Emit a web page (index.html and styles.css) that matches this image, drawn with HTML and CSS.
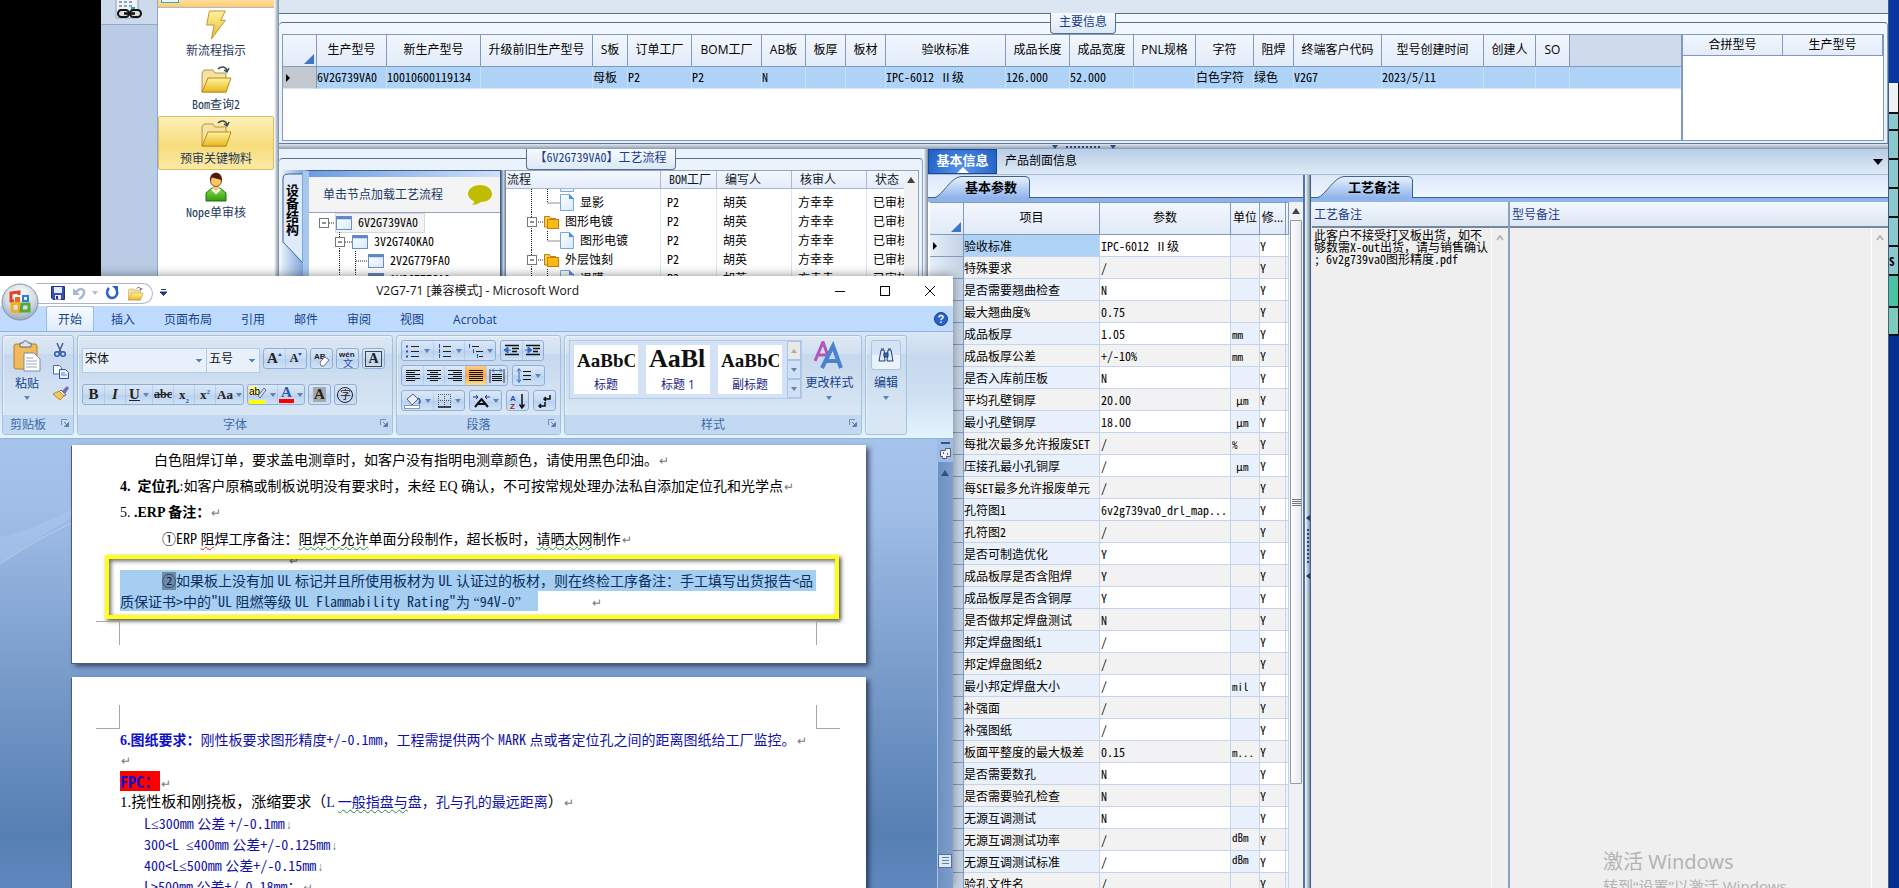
FILE: index.html
```html
<!DOCTYPE html>
<html lang="zh-CN">
<head>
<meta charset="utf-8">
<title>V2G7-71 [兼容模式] - Microsoft Word</title>
<link rel="stylesheet" href="styles.css">
</head>
<body>
<svg width="0" height="0" class="defs" aria-hidden="true">
  <defs>
    <linearGradient id="gy" x1="0" y1="0" x2="0" y2="1"><stop offset="0" stop-color="#fff3a0"/><stop offset="1" stop-color="#eab820"/></linearGradient>
    <linearGradient id="gg" x1="0" y1="0" x2="0" y2="1"><stop offset="0" stop-color="#8be04a"/><stop offset="1" stop-color="#2f9a10"/></linearGradient>
    <linearGradient id="gb" x1="0" y1="0" x2="1" y2="1"><stop offset="0" stop-color="#ffffff"/><stop offset="1" stop-color="#d5e9fb"/></linearGradient>
    <symbol id="folder" viewBox="0 0 32 30"><path d="M2 9l2-3h9l2 3h11v19H2z" fill="#f3e2a4" stroke="#b8923c"/><path d="M2 28l6-14h23l-5 14z" fill="url(#gy)" stroke="#b98a10"/><path d="M18 5c3-3 8-3 9 2M24 6l3 2 2-4" fill="none" stroke="#3c4654" stroke-width="1.5"/></symbol>
    <symbol id="win" viewBox="0 0 16 14"><rect x=".5" y=".5" width="15" height="13" fill="url(#gb)" stroke="#6d8fbf"/><path d="M1 2h14" stroke="#5b86c8" stroke-width="2.5"/></symbol>
    <symbol id="doc" viewBox="0 0 14 17"><path d="M.5.5h9l4 4v12H.5z" fill="url(#gb)" stroke="#7ba6dd"/><path d="M9 0v5h5z" fill="#4a8fe0"/></symbol>
    <symbol id="dir" viewBox="0 0 15 14"><path d="M.5 1.500h5l1 2h5V12H.5z" fill="#f7d24a" stroke="#b57c10"/><rect x="3.500" y="4.500" width="11" height="9" fill="#fcb813" stroke="#c57f08"/></symbol>
    <symbol id="dd" viewBox="0 0 6 4"><path d="M0 0h6L3 4z" fill="#5c83b8"/></symbol>
    <symbol id="launch" viewBox="0 0 8 8"><path d="M.5 6V.5H6" fill="none" stroke="#6d8fb8"/><path d="M3 3l3 3M7.500 3.500v4h-4z" stroke="#5a7fae" fill="#5a7fae"/></symbol>
  </defs>
</svg>

<div class="void"></div>
<aside class="rail">
  <button class="rail-btn" aria-label="链接">
    <svg width="28" height="22" viewBox="0 0 28 22"><rect x="1" y="-4" width="22" height="22" fill="#eef3f9" stroke="#8e9fb8"/><path d="M4 2h3m2 0h3m2 0h3M4 6h3m2 0h3m2 0h3M4 10h3m2 0h3" stroke="#8fa0b8" stroke-width="2"/><rect x="16" y="7" width="4" height="4" fill="#22a0c8"/><rect x="3" y="10" width="11" height="7" rx="3.500" fill="#ddd" stroke="#111" stroke-width="2"/><rect x="15" y="10" width="11" height="7" rx="3.500" fill="#ddd" stroke="#111" stroke-width="2"/><path d="M9 13.500h11" stroke="#111" stroke-width="2.500"/></svg>
  </button>
</aside>
<nav class="nav">
  <div class="nav-head"><i></i></div>
  <button class="nav-item"><svg width="24" height="32" viewBox="0 0 24 32"><path d="M5 1h17l-5 10h5L7 31l3-15H2z" fill="url(#gy)" stroke="#b79332"/></svg><span>新流程指示</span></button>
  <button class="nav-item"><svg width="32" height="30"><use href="#folder"/></svg><span>Bom查询2</span></button>
  <button class="nav-item on"><svg width="32" height="30"><use href="#folder"/></svg><span>预审关键物料</span></button>
  <button class="nav-item"><svg width="24" height="30" viewBox="0 0 24 30"><path d="M2 29v-8l6-5h8l6 5v8z" fill="url(#gg)" stroke="#226d10"/><path d="M9 13h6v4l-3 3-3-3z" fill="#f4c87a"/><circle cx="12" cy="9" r="5.500" fill="#f7c56a" stroke="#8a5512"/><path d="M6 9c-1-11 13-11 12 0-2-3-9-2-10-4z" fill="#4c1c08"/><path d="M8 17l4 4 4-4" fill="none" stroke="#fff" stroke-width="2"/></svg><span>Nope单审核</span></button>
</nav>
<div class="vsplit"></div>

<main class="app">
  <div class="strip"></div>
  <section class="main-info">
    <div class="group">
      <h2 class="cap">主要信息</h2>
      <div class="tables">
        <div class="grid-wrap">
          <table class="grid">
            <colgroup><col class="w34"><col class="w70"><col class="w94"><col class="w112"><col class="w35"><col class="w64"><col class="w70"><col class="w44"><col class="w40"><col class="w40"><col class="w120"><col class="w64"><col class="w64"><col class="w62"><col class="w58"><col class="w40"><col class="w88"><col class="w102"><col class="w52"><col class="w34"><col></colgroup>
            <thead><tr><th class="corner"></th><th>生产型号</th><th>新生产型号</th><th>升级前旧生产型号</th><th>S板</th><th>订单工厂</th><th>BOM工厂</th><th>AB板</th><th>板厚</th><th>板材</th><th>验收标准</th><th>成品长度</th><th>成品宽度</th><th>PNL规格</th><th>字符</th><th>阻焊</th><th>终端客户代码</th><th>型号创建时间</th><th>创建人</th><th>SO</th><th class="blank"></th></tr></thead>
            <tbody><tr><td class="rowhead"><i class="ptr"></i></td><td>6V2G739VA0</td><td>10010600119134</td><td></td><td>母板</td><td>P2</td><td>P2</td><td>N</td><td></td><td></td><td>IPC-6012 Ⅱ级</td><td>126.000</td><td>52.000</td><td></td><td>白色字符</td><td>绿色</td><td>V2G7</td><td>2023/5/11</td><td></td><td></td><td></td></tr></tbody>
          </table>
        </div>
        <div class="side-wrap">
          <table class="grid side"><thead><tr><th>合拼型号</th><th>生产型号</th></tr></thead></table>
        </div>
      </div>
    </div>
  </section>
  <div class="hsplit"><i class="tri"></i><i class="dots"></i><i class="tri"></i></div>

  <div class="lower">
    <section class="process">
      <div class="group">
        <h2 class="cap">【6V2G739VA0】工艺流程</h2>
        <div class="proc-body">
          <div class="vtab"><svg width="21" height="300" viewBox="0 0 21 300"><path d="M20 4H6Q1 4 1 9V72L20 92" fill="#dfeafa" stroke="#3a6096"/></svg><span>设备结构</span></div>
          <div class="tool">
            <div class="hint"><span>单击节点加载工艺流程</span><svg width="26" height="22" viewBox="0 0 26 22"><path d="M13 1c7 0 12 4 12 9s-5 8-11 8c-3 2-6 3-9 3 2-1 2-3 2-4-3-1-6-4-6-7 0-5 5-9 12-9z" fill="#c0bd00"/></svg></div>
            <div class="tree">
              <div><svg width="26" height="19"><rect x="9.500" y="5.500" width="9" height="9" fill="#fff" stroke="#777"/><path d="M12 10h4" stroke="#222"/><path d="M19 10h7" stroke="#222" stroke-dasharray="1 1"/></svg><b><svg width="16" height="14"><use href="#win"/></svg>6V2G739VA0</b></div>
              <div><svg width="42" height="19"><path d="M29.500 0v19" stroke="#222" stroke-dasharray="1 1"/><rect x="25.500" y="5.500" width="9" height="9" fill="#fff" stroke="#777"/><path d="M28 10h4" stroke="#222"/><path d="M35 10h7" stroke="#222" stroke-dasharray="1 1"/></svg><b><svg width="16" height="14"><use href="#win"/></svg>3V2G740KA0</b></div>
              <div><svg width="58" height="19"><path d="M29.500 0v19M45.500 0v19M46 10h12" stroke="#222" stroke-dasharray="1 1"/></svg><b><svg width="16" height="14"><use href="#win"/></svg>2V2G779FA0</b></div>
              <div><svg width="58" height="19"><path d="M29.500 0v19M45.500 0v19M46 10h12" stroke="#222" stroke-dasharray="1 1"/></svg><b><svg width="16" height="14"><use href="#win"/></svg>1V2G777GA0</b></div>
            </div>
          </div>
          <div class="vsplit dark"></div>
          <div class="flow">
            <table>
              <colgroup><col class="w155"><col class="w56"><col class="w75"><col class="w75"><col></colgroup>
              <thead><tr><th>流程</th><th>BOM工厂</th><th>编写人</th><th>核审人</th><th>状态</th></tr></thead>
              <tbody>
                <tr class="cut"><td><svg width="80" height="4" viewBox="0 12 80 4"><path d="M25.500 0v17M41.500 0v17" stroke="#222" stroke-dasharray="1 1"/><path d="M54.500 4v10.500h13V4" fill="#e8f3fd" stroke="#7ba6dd"/></svg></td><td></td><td></td><td></td><td></td></tr>
                <tr><td><div class="node"><svg width="54" height="19"><path d="M25.500 0v19M41.500 0v10h13" fill="none" stroke="#222" stroke-dasharray="1 1"/></svg><svg width="14" height="17"><use href="#doc"/></svg>显影</div></td><td>P2</td><td>胡英</td><td>方幸幸</td><td>已审核</td></tr>
                <tr><td><div class="node"><svg width="38" height="19"><path d="M25.500 0v19M30 10h8" stroke="#222" stroke-dasharray="1 1"/><rect x="21.500" y="5.500" width="9" height="9" fill="#fff" stroke="#777"/><path d="M24 10h4" stroke="#222"/></svg><svg width="15" height="14"><use href="#dir"/></svg>图形电镀</div></td><td>P2</td><td>胡英</td><td>方幸幸</td><td>已审核</td></tr>
                <tr><td><div class="node"><svg width="54" height="19"><path d="M25.500 0v19M41.500 0v10h13" fill="none" stroke="#222" stroke-dasharray="1 1"/></svg><svg width="14" height="17"><use href="#doc"/></svg>图形电镀</div></td><td>P2</td><td>胡英</td><td>方幸幸</td><td>已审核</td></tr>
                <tr><td><div class="node"><svg width="38" height="19"><path d="M25.500 0v19M30 10h8" stroke="#222" stroke-dasharray="1 1"/><rect x="21.500" y="5.500" width="9" height="9" fill="#fff" stroke="#777"/><path d="M24 10h4" stroke="#222"/></svg><svg width="15" height="14"><use href="#dir"/></svg>外层蚀刻</div></td><td>P2</td><td>胡英</td><td>方幸幸</td><td>已审核</td></tr>
                <tr><td><div class="node"><svg width="54" height="19"><path d="M25.500 0v19M41.500 0v10h13" fill="none" stroke="#222" stroke-dasharray="1 1"/></svg><svg width="14" height="17"><use href="#doc"/></svg>退膜</div></td><td>P2</td><td>胡英</td><td>方幸幸</td><td>已审核</td></tr>
              </tbody>
            </table>
            <div class="sbar"><i class="up"></i></div>
          </div>
        </div>
      </div>
    </section>
    <div class="vsplit"></div>

    <section class="info">
      <div class="tabs"><button class="on">基本信息</button><button>产品剖面信息</button><i class="down"></i></div>
      <div class="info-body">
        <div class="params">
          <div class="subtabs"><svg width="98" height="23" viewBox="0 0 98 23"><path d="M1 23C10 20 18 2 28 1.500H92Q96 1.500 96.500 5V23" fill="url(#tabg)" stroke="#3a6096"/><defs><linearGradient id="tabg" x1="0" y1="0" x2="0" y2="1"><stop offset="0" stop-color="#eaf2fd"/><stop offset="1" stop-color="#8fb4ea"/></linearGradient></defs></svg><strong>基本参数</strong></div>
          <div class="ptable">
            <table>
              <colgroup><col class="w34"><col class="w136"><col class="w131"><col class="w29"><col class="w26"><col></colgroup>
              <thead><tr><th class="corner"></th><th>项目</th><th>参数</th><th>单位</th><th>修...</th><th></th></tr></thead>
              <tbody>
                <tr class="sel"><td><i class="ptr"></i></td><td>验收标准</td><td>IPC-6012 Ⅱ级</td><td></td><td>Y</td><td></td></tr>
                <tr><td></td><td>特殊要求</td><td>/</td><td></td><td>Y</td><td></td></tr>
                <tr><td></td><td>是否需要翘曲检查</td><td>N</td><td></td><td>Y</td><td></td></tr>
                <tr><td></td><td>最大翘曲度%</td><td>0.75</td><td></td><td>Y</td><td></td></tr>
                <tr><td></td><td>成品板厚</td><td>1.05</td><td>mm</td><td>Y</td><td></td></tr>
                <tr><td></td><td>成品板厚公差</td><td>+/-10%</td><td>mm</td><td>Y</td><td></td></tr>
                <tr><td></td><td>是否入库前压板</td><td>N</td><td></td><td>Y</td><td></td></tr>
                <tr><td></td><td>平均孔壁铜厚</td><td>20.00</td><td class="mu">μm</td><td>Y</td><td></td></tr>
                <tr><td></td><td>最小孔壁铜厚</td><td>18.00</td><td class="mu">μm</td><td>Y</td><td></td></tr>
                <tr><td></td><td>每批次最多允许报废SET</td><td>/</td><td>%</td><td>Y</td><td></td></tr>
                <tr><td></td><td>压接孔最小孔铜厚</td><td>/</td><td class="mu">μm</td><td>Y</td><td></td></tr>
                <tr><td></td><td>每SET最多允许报废单元</td><td>/</td><td></td><td>Y</td><td></td></tr>
                <tr><td></td><td>孔符图1</td><td>6v2g739va0_drl_map...</td><td></td><td>Y</td><td></td></tr>
                <tr><td></td><td>孔符图2</td><td>/</td><td></td><td>Y</td><td></td></tr>
                <tr><td></td><td>是否可制造优化</td><td>Y</td><td></td><td>Y</td><td></td></tr>
                <tr><td></td><td>成品板厚是否含阻焊</td><td>Y</td><td></td><td>Y</td><td></td></tr>
                <tr><td></td><td>成品板厚是否含铜厚</td><td>Y</td><td></td><td>Y</td><td></td></tr>
                <tr><td></td><td>是否做邦定焊盘测试</td><td>N</td><td></td><td>Y</td><td></td></tr>
                <tr><td></td><td>邦定焊盘图纸1</td><td>/</td><td></td><td>Y</td><td></td></tr>
                <tr><td></td><td>邦定焊盘图纸2</td><td>/</td><td></td><td>Y</td><td></td></tr>
                <tr><td></td><td>最小邦定焊盘大小</td><td>/</td><td>mil</td><td>Y</td><td></td></tr>
                <tr><td></td><td>补强面</td><td>/</td><td></td><td>Y</td><td></td></tr>
                <tr><td></td><td>补强图纸</td><td>/</td><td></td><td>Y</td><td></td></tr>
                <tr><td></td><td>板面平整度的最大极差</td><td>0.15</td><td>m...</td><td>Y</td><td></td></tr>
                <tr><td></td><td>是否需要数孔</td><td>N</td><td></td><td>Y</td><td></td></tr>
                <tr><td></td><td>是否需要验孔检查</td><td>N</td><td></td><td>Y</td><td></td></tr>
                <tr><td></td><td>无源互调测试</td><td>N</td><td></td><td>Y</td><td></td></tr>
                <tr><td></td><td>无源互调测试功率</td><td>/</td><td class="hi">dBm</td><td>Y</td><td></td></tr>
                <tr><td></td><td>无源互调测试标准</td><td>/</td><td class="hi">dBm</td><td>Y</td><td></td></tr>
                <tr><td></td><td>验孔文件名</td><td>/</td><td></td><td>Y</td><td></td></tr>
              </tbody>
            </table>
            <div class="sbar"><i class="up"></i><div class="thumb"><i></i></div></div>
          </div>
        </div>
        <div class="vsplit grip"><i class="left"></i><i class="vdots"></i><i class="left"></i></div>
        <div class="remarks">
          <div class="subtabs"><svg width="98" height="23" viewBox="0 0 98 23"><path d="M1 23C10 20 18 2 28 1.500H92Q96 1.500 96.500 5V23" fill="url(#tabg)" stroke="#3a6096"/></svg><strong>工艺备注</strong></div>
          <div class="notes">
            <div class="note n1"><label for="n1">工艺备注</label><div class="area"><textarea id="n1" spellcheck="false" readonly>此客户不接受打叉板出货，如不
够数需X-out出货，请与销售确认
; 6v2g739va0图形精度.pdf</textarea><div class="rail2"><svg width="8" height="6"><path d="M1 5l3-4 3 4" fill="none" stroke="#b5b5b5" stroke-width="2"/></svg></div></div></div>
            <div class="note n2"><label for="n2">型号备注</label><div class="area"><textarea id="n2" readonly></textarea><div class="rail2"><svg width="8" height="6"><path d="M1 5l3-4 3 4" fill="none" stroke="#b5b5b5" stroke-width="2"/></svg></div></div></div>
          </div>
        </div>
      </div>
    </section>
  </div>
</main>
<div class="behind"><i class="b1"></i><i class="b2"></i><i class="c0"></i><i class="c"></i><i class="c"></i><i class="c"></i><i class="c"></i><i class="c"><b>S</b></i><i class="b3"></i><i class="b4"></i></div>

<div class="watermark"><p>激活 Windows</p><span>转到“设置”以激活 Windows。</span></div>

<article class="word">
  <header class="title">
    <div class="qat">
      <button aria-label="保存"><svg width="14" height="14" viewBox="0 0 14 14"><path d="M.5.5h13v13H2l-1.500-1.500z" fill="#3d4bb5" stroke="#27307e"/><rect x="3" y="1" width="8" height="6" fill="#dfeefc"/><rect x="4" y="9" width="6" height="4.500" fill="#eef"/><rect x="5" y="10" width="2" height="3" fill="#27307e"/></svg></button>
      <button aria-label="撤消"><svg width="13" height="14" viewBox="0 0 13 14"><path d="M3 6c4-5 9-3 8 1-.5 3-3 5-5 6" fill="none" stroke="#a9b7cc" stroke-width="2.500"/><path d="M0 2v7h7z" fill="#a9b7cc"/></svg></button>
      <svg class="dd g" width="6" height="4"><use href="#dd"/></svg>
      <button aria-label="恢复"><svg width="14" height="14" viewBox="0 0 14 14"><path d="M4 2c-4 4-1 10 3 10s7-5 4-9" fill="none" stroke="#2f5fc8" stroke-width="2.500"/><path d="M7 0h6v6z" fill="#2f5fc8"/></svg></button>
      <button aria-label="打开"><svg width="17" height="15" viewBox="0 0 32 30"><use href="#folder"/></svg></button>
    </div>
    <svg class="more" width="7" height="7"><path d="M1 .5h5M0 3h7L3.500 6.500z" stroke="#1e3a78" fill="#1e3a78"/></svg>
    <h1>V2G7-71 [兼容模式] - Microsoft Word</h1>
    <div class="wbtn">
      <button aria-label="最小化"><svg width="12" height="12"><path d="M1 6.500h10" stroke="#000"/></svg></button>
      <button aria-label="最大化"><svg width="12" height="12"><rect x="1.500" y="1.500" width="9" height="9" fill="none" stroke="#000"/></svg></button>
      <button aria-label="关闭"><svg width="12" height="12"><path d="M1 1l10 10M11 1L1 11" stroke="#000"/></svg></button>
    </div>
  </header>
  <button class="orb" aria-label="Office 按钮"><svg width="38" height="38" viewBox="0 0 38 38"><defs><radialGradient id="ob" cx=".5" cy=".3" r=".7"><stop offset="0" stop-color="#fff"/><stop offset=".6" stop-color="#d3dbe6"/><stop offset="1" stop-color="#99a8bd"/></radialGradient></defs><circle cx="19" cy="19" r="18" fill="url(#ob)" stroke="#8593aa"/><g fill="none" stroke-width="3"><path d="M18 12V9l-8 1v8h3" stroke="#d9481c"/><rect x="22" y="13" width="5" height="5" stroke="#2b7fd0" stroke-width="2"/><path d="M11 21v7l7 1v-9z" stroke="#f0b020"/><path d="M21 21h7v7h-8z" stroke="#56a838"/></g><path d="M14 14h5v5h-5z" fill="#e8672a"/></svg></button>
  <nav class="rtabs"><button class="on">开始</button><button>插入</button><button>页面布局</button><button>引用</button><button>邮件</button><button>审阅</button><button>视图</button><button>Acrobat</button><svg class="help" width="14" height="14" viewBox="0 0 14 14"><circle cx="7" cy="7" r="6.500" fill="#2a62c8" stroke="#1b3f8c"/><path d="M5 5.500c0-3 4.500-2.500 4 0-.3 1-2 1.200-2 2.700M7 9.500v1.500" fill="none" stroke="#fff" stroke-width="1.500"/></svg></nav>

  <div class="ribbon">
    <section class="rg clip"><div class="rc">
      <button class="paste"><svg width="28" height="32" viewBox="0 0 28 32"><rect x="1" y="4" width="23" height="25" rx="2" fill="#f0b95a" stroke="#b77f2a"/><path d="M7 3h3c0-3 5-3 5 0h3v4H7z" fill="#dfe3ea" stroke="#667"/><path d="M11 13h10l6 6v12H11z" fill="#fff" stroke="#7a8ba6"/><path d="M13 18h7m-7 3h11m-11 3h11m-11 3h11" stroke="#9aa9c0"/></svg><span>粘贴</span><svg width="6" height="4"><use href="#dd"/></svg></button>
      <div class="mini"><button aria-label="剪切"><svg width="14" height="16" viewBox="0 0 14 16"><path d="M4 1l4 9M10 1L6 10" stroke="#4a5f80" stroke-width="1.500"/><circle cx="4" cy="12" r="2.300" fill="none" stroke="#2c58b8" stroke-width="1.500"/><circle cx="10" cy="12" r="2.300" fill="none" stroke="#2c58b8" stroke-width="1.500"/></svg></button><button aria-label="复制"><svg width="16" height="14" viewBox="0 0 16 14"><path d="M.5.5h6l2 2V9h-8z" fill="#fff" stroke="#4668b0"/><path d="M6.500 4.500h6l3 3v6h-9z" fill="#e9f1fc" stroke="#2f55a4"/><path d="M8 8h4m-4 2h6" stroke="#5f82c4"/></svg></button><button aria-label="格式刷"><svg width="16" height="14" viewBox="0 0 16 14"><path d="M9 5l5-5 2 2-4 6z" fill="#7a6bb0"/><path d="M8 4l5 5-2 1-5-4z" fill="#e8e8ee" stroke="#667"/><path d="M6 5l5 5-4 4-7-6z" fill="#f2c860" stroke="#b78a2c"/></svg></button></div>
    </div><footer>剪贴板<svg width="8" height="8"><use href="#launch"/></svg></footer></section>

    <section class="rg font"><div class="rc col">
      <div class="rr"><select class="fsel" aria-label="字体"><option>宋体</option></select><select class="ssel" aria-label="字号"><option>五号</option></select>
        <div class="bg"><button><b class="ser">A</b><i class="tup"></i></button><button><b class="ser sm">A</b><i class="tdn"></i></button></div>
        <div class="bg"><button aria-label="清除格式"><svg width="18" height="16" viewBox="0 0 18 16"><text x="1" y="8" class="t8">AB</text><path d="M7 11l5-5 4 3-5 6H8z" fill="#fff" stroke="#66779a"/></svg></button></div>
        <div class="bg"><button aria-label="拼音指南"><svg width="18" height="18" viewBox="0 0 18 18"><text x="0" y="7" class="t8">wén</text><text x="4" y="17" class="t12">文</text></svg></button></div>
        <div class="bg"><button><b class="ser box">A</b></button></div></div>
      <div class="rr low">
        <div class="bg"><button><b class="ser">B</b></button><button><i class="ser">I</i></button><button class="d"><b class="ser u">U</b><svg width="6" height="4"><use href="#dd"/></svg></button><button><b class="s">abc</b></button><button><b class="sb">x<sub>2</sub></b></button><button><b class="sb">x<sup>2</sup></b></button><button class="d"><b class="sb">Aa</b><svg width="6" height="4"><use href="#dd"/></svg></button></div>
        <div class="bg"><button class="d" aria-label="突出显示"><svg width="18" height="18" viewBox="0 0 18 18"><rect width="9" height="9" fill="#fdf68a"/><text x="0" y="9" class="t10">ab</text><path d="M9 10l6-8 2 2-6 8z" fill="#d8e2f2" stroke="#5b6c8c"/><rect y="14" width="16" height="4" fill="#ff0"/></svg><svg width="6" height="4"><use href="#dd"/></svg></button><button class="d" aria-label="字体颜色"><b class="ser red">A</b><svg width="6" height="4"><use href="#dd"/></svg></button></div>
        <div class="bg"><button><b class="ser shade">A</b></button></div><div class="bg"><button><span class="circ">字</span></button></div></div>
    </div><footer>字体<svg width="8" height="8"><use href="#launch"/></svg></footer></section>

    <section class="rg para"><div class="rc col tight">
      <div class="rr">
        <div class="bg"><button class="d" aria-label="项目符号"><svg width="16" height="14"><path d="M6 2.500h8M6 7.500h8M6 12.500h8" stroke="#222"/><path d="M1 2.500h2M1 7.500h2M1 12.500h2" stroke="#2b4fa8" stroke-width="2"/></svg><svg width="6" height="4"><use href="#dd"/></svg></button><button class="d" aria-label="编号"><svg width="16" height="14"><path d="M6 2.500h8M6 7.500h8M6 12.500h8" stroke="#222"/><path d="M2.500 0v4M2.500 5v4M2.500 10v4" stroke="#2b4fa8"/></svg><svg width="6" height="4"><use href="#dd"/></svg></button><button class="d" aria-label="多级列表"><svg width="16" height="14"><path d="M4 2.500h7M8 7.500h7M11 12.500h4" stroke="#222"/><path d="M1.500 0v4M5.500 5v4M9.500 10v4" stroke="#2b4fa8"/></svg><svg width="6" height="4"><use href="#dd"/></svg></button></div>
        <div class="bg"><button aria-label="减少缩进"><svg width="16" height="13"><path d="M1 1.500h14M8 4.500h7M8 7.500h5M1 10.500h14" stroke="#111" stroke-width="1.500"/><path d="M0 6l4-3v6zM4 6h3" fill="#3567c4" stroke="#3567c4"/></svg></button><button aria-label="增加缩进"><svg width="16" height="13"><path d="M1 1.500h14M8 4.500h7M8 7.500h5M1 10.500h14" stroke="#111" stroke-width="1.500"/><path d="M7 6L3 3v6zM0 6h3" fill="#3567c4" stroke="#3567c4"/></svg></button></div>
      </div>
      <div class="rr">
        <div class="bg"><button aria-label="左对齐"><svg width="14" height="14"><path d="M0 1.500h14M0 3.500h9M0 5.500h14M0 7.500h9M0 9.500h14M0 11.500h9" stroke="#111"/></svg></button><button aria-label="居中"><svg width="14" height="14"><path d="M0 1.500h14M3 3.500h8M0 5.500h14M3 7.500h8M0 9.500h14M3 11.500h8" stroke="#111"/></svg></button><button aria-label="右对齐"><svg width="14" height="14"><path d="M0 1.500h14M5 3.500h9M0 5.500h14M5 7.500h9M0 9.500h14M5 11.500h9" stroke="#111"/></svg></button><button class="hot" aria-label="两端对齐"><svg width="14" height="14"><path d="M0 1.500h14M0 3.500h14M0 5.500h14M0 7.500h14M0 9.500h14M0 11.500h14" stroke="#111"/></svg></button><button aria-label="分散对齐"><svg width="16" height="15"><path d="M1 1v14M15 1v14" stroke="#333"/><path d="M3 6.500h10M3 8.500h10M3 10.500h10M3 12.500h10" stroke="#111"/><path d="M3 2.500h10M5 .5l-2 2 2 2M11 .5l2 2-2 2" fill="none" stroke="#3567c4"/></svg></button></div>
        <div class="bg"><button class="d" aria-label="行距"><svg width="16" height="15"><path d="M7 3.500h8M7 7.500h8M7 11.500h8" stroke="#111"/><path d="M3 1v13M1 3.500l2-3 2 3M1 11.500l2 3 2-3" fill="none" stroke="#3567c4"/></svg><svg width="6" height="4"><use href="#dd"/></svg></button></div>
      </div>
      <div class="rr">
        <div class="bg"><button class="d" aria-label="底纹"><svg width="18" height="16"><path d="M3 6l6-5 5 5-6 6z" fill="#e8eef8" stroke="#50648a"/><path d="M14 5c3 2 2 4 1 6" fill="none" stroke="#3567c4" stroke-width="2"/><rect x=".5" y="12.500" width="15" height="3" fill="#fff" stroke="#8a9ab5"/></svg><svg width="6" height="4"><use href="#dd"/></svg></button><button class="d" aria-label="边框"><svg width="14" height="14"><path d="M.5 0v14M6.500 0v14M12.500 0v14M0 .5h13M0 6.500h13" stroke="#555" stroke-dasharray="1 1"/><path d="M0 13h13" stroke="#111" stroke-width="1.500"/></svg><svg width="6" height="4"><use href="#dd"/></svg></button></div>
        <div class="bg"><button class="d" aria-label="中文版式"><svg width="17" height="14"><path d="M2 13L8.500 5 15 13M5 10h7" fill="none" stroke="#111" stroke-width="2"/><path d="M0 3h5M3 1l2 2-2 2M17 3h-5M14 1l-2 2 2 2" fill="none" stroke="#1b2f9c"/></svg><svg width="6" height="4"><use href="#dd"/></svg></button></div>
        <div class="bg"><button aria-label="排序"><svg width="16" height="16"><text x="0" y="8" class="t8 bl">A</text><text x="0" y="16" class="t8 rd">Z</text><path d="M12 1v13M9.500 11.500L12 15l2.500-3.500" fill="none" stroke="#111" stroke-width="1.500"/></svg></button></div>
        <div class="bg"><button aria-label="显示标记"><svg width="14" height="14"><path d="M12 1v4H6M8 3L6 5l2 2M7 8v4H1M3 10l-2 2 2 2" fill="none" stroke="#111" stroke-width="1.500"/></svg></button></div>
      </div>
    </div><footer>段落<svg width="8" height="8"><use href="#launch"/></svg></footer></section>

    <section class="rg styles"><div class="rc">
      <div class="gal"><button><b>AaBbC</b><span>标题</span></button><button><b class="big">AaBl</b><span>标题 1</span></button><button><b>AaBbC</b><span>副标题</span></button><div class="gsb"><i class="u"></i><i></i><i></i></div></div>
      <button class="chg"><svg width="30" height="29" viewBox="0 0 30 29"><path d="M1 20L9 1l5 14M4 14h8" fill="none" stroke="#b455b8" stroke-width="3"/><path d="M8 27L19 5l8 22M12 20h13" fill="none" stroke="#4a82cc" stroke-width="4"/></svg><span>更改样式</span><svg width="6" height="4"><use href="#dd"/></svg></button>
    </div><footer>样式<svg width="8" height="8"><use href="#launch"/></svg></footer></section>

    <section class="rg edit"><button class="chg"><i class="ib"><svg width="16" height="14" viewBox="0 0 16 14"><path d="M1 13l2-11h3l1 11zM9 13l1-11h3l2 11z" fill="#dfe9fa" stroke="#1f3f80"/><path d="M6 5h4v4H6zM3 1h3M10 1h3" fill="#4468ac" stroke="#1f3f80"/></svg></i><span>编辑</span><svg width="6" height="4"><use href="#dd"/></svg></button></section>
  </div>

  <div class="docarea">
    <svg class="swoosh" viewBox="0 0 72 160" width="72" height="160"><path d="M0 98Q40 88 72 70V78Q40 98 0 125z" fill="#b6cdf0" opacity=".35"/><path d="M0 125Q40 98 72 84" fill="none" stroke="#cfe0f8" opacity=".5"/></svg>
    <div class="pages">
      <div class="page p1">
        <p class="in1">白色阻焊订单，要求盖电测章时，如客户没有指明电测章颜色，请使用黑色印油。<i class="cr">↵</i></p>
        <p><b>4. &nbsp;定位孔</b>:如客户原稿或制板说明没有要求时，未经 EQ 确认，不可按常规处理办法私自添加定位孔和光学点<i class="cr">↵</i></p>
        <p>5. <b>.ERP 备注：</b><i class="cr">↵</i></p>
        <p class="in2">①<span class="m">ERP</span> <u class="r">阻</u>焊工序备注：<u>阻焊不允许</u>单面分段制作，超长板时，<u>请晒太网</u>制作<i class="cr">↵</i></p>
        <p class="empty"><i class="cr">↵</i></p>
        <p class="sl one"><span class="two">②</span>如果板上没有加 <span class="m">UL</span> 标记并且所使用板材为 <span class="m">UL</span> 认证过的板材，则在终检工序备注：手工填写出货报告<span class="m">&lt;</span>品</p>
        <p class="sl-row"><span class="sl">质保证书<span class="m">&gt;</span>中的<span class="m">"UL</span> 阻燃等级 <span class="m">UL Flammability Rating"</span>为 “<span class="m">94V-0</span>”&nbsp;&nbsp;&nbsp;&nbsp;&nbsp;</span><i class="cr far">↵</i></p>
        <div class="ybox"></div>
        <i class="mk bl"></i><i class="mk br"></i>
      </div>
      <div class="page p2">
        <i class="mk tl"></i><i class="mk tr"></i>
        <p class="blue"><b>6.图纸要求：</b>刚性板要求图形精度<span class="m">+/-0.1mm</span>，工程需提供两个 <span class="m">MARK</span> 点或者定位孔之间的距离图纸给工厂监控。<i class="cr">↵</i></p>
        <p><i class="cr">↵</i></p>
        <p class="blue"><b class="fpc"><span class="m">FPC</span>：</b><i class="cr">↵</i></p>
        <p class="lg">1.挠性板和刚挠板，涨缩要求（<span class="blue">L <u>一般指盘与</u>盘，孔与孔的最远距离</span>）<i class="cr">↵</i></p>
        <p class="blue in3"><span class="m">L</span>≤<span class="m">300mm</span> 公差 <span class="m">+/-0.1mm</span><i class="cr">↓</i></p>
        <p class="blue in3"><span class="m">300&lt;L </span>≤<span class="m">400mm</span> 公差<span class="m">+/-0.125mm</span><i class="cr">↓</i></p>
        <p class="blue in3"><span class="m">400&lt;L</span>≤<span class="m">500mm</span> 公差<span class="m">+/-0.15mm</span><i class="cr">↓</i></p>
        <p class="blue in3"><span class="m">L&gt;500mm</span> 公差<span class="m">+/-0.18mm</span>；<i class="cr">↵</i></p>
      </div>
    </div>
    <div class="wscroll"><i class="split"></i><svg width="13" height="12"><path d="M1.500 3.500h5v-2h5v8h-4v2h-4v-2h-2z" fill="#eef3fb" stroke="#4a5f88"/><path d="M4 6h1m3 1h1" stroke="#b33" stroke-width="2"/></svg><div class="track"><i class="up"></i><div class="th"></div></div></div>
  </div>
</article>
</body>
</html>
```

FILE: styles.css
```css
* { box-sizing: border-box; }
body {
  margin: 0; height: 100vh; overflow: hidden; display: flex; background: #000; color: #000;
  font: 12px/1.2 "Noto Sans Mono CJK SC", "Noto Sans CJK SC", monospace;
}
h1, h2, p { margin: 0; font-weight: normal; }
button { font: inherit; color: inherit; border: 0; background: none; padding: 0; margin: 0; }
i { font-style: normal; }
svg { flex: none; display: block; }
table { border-collapse: separate; border-spacing: 0; table-layout: fixed; width: 100%; }
td, th { padding: 0; font-weight: normal; white-space: nowrap; overflow: hidden; }
.defs { position: absolute; }

.w26 { width: 26px; } .w29 { width: 29px; } .w34 { width: 34px; } .w35 { width: 35px; }
.w40 { width: 40px; } .w44 { width: 44px; } .w52 { width: 52px; } .w56 { width: 56px; }
.w58 { width: 58px; } .w62 { width: 62px; } .w64 { width: 64px; } .w70 { width: 70px; }
.w75 { width: 75px; } .w88 { width: 88px; } .w94 { width: 94px; } .w102 { width: 102px; }
.w112 { width: 112px; } .w120 { width: 120px; } .w131 { width: 131px; } .w136 { width: 136px; }
.w155 { width: 155px; }

.void { flex: 0 0 101px; }
.rail { flex: 0 0 57px; background: #b9cbe5; border-right: 1px solid #8ea8cb; }
.rail-btn { width: 100%; height: 25px; background: #ccdaec; border-bottom: 1px solid #93a9c8; display: flex; justify-content: center; }
.nav { flex: 0 0 116px; background: #fff; }
.nav-head { height: 8px; background: linear-gradient(#ffdf9c, #ffca69); border-bottom: 1px solid #a9bcd6; padding-left: 3px; }
.nav-head i { display: block; width: 18px; height: 3px; background: #e8f6fb; border: 1px solid #3aa6c4; border-top: 0; }
.nav-item { width: 100%; height: 54px; display: flex; flex-direction: column; align-items: center; color: #1e395b; line-height: 16px; padding-top: 1px; gap: 2px; border: 1px solid transparent; }
.nav-item svg { height: 30px; }
.nav-item.on { background: linear-gradient(#fdf0b8, #f7dc7c 55%, #fbeaa4); border-color: #d9bf62; border-radius: 2px; }
.vsplit { flex: 0 0 5px; background: linear-gradient(90deg, #fff, #c9d3df 40%, #7e8c9c); }
.dark { background: linear-gradient(90deg, #5a7290, #c4cfdc 50%, #66788e); }

.app { flex: 1; min-width: 0; display: flex; flex-direction: column; background: #eaf2fb; border-right: 1px solid #40608a; }
.strip { flex: 0 0 13px; background: #dbe6f2; }
.main-info { flex: 0 0 131px; border-top: 1px solid #5a7089; padding-top: 8px; display: flex; border-bottom: 1px solid #5a79a5; background: linear-gradient(#f2f8ff, #e6effa); }
.group { position: relative; flex: 1; min-width: 0; border-top: 1px solid #5a7089; border-right: 1px solid #8aa0bc; border-radius: 4px 4px 0 0; padding: 11px 3px 0 3px; display: flex; }
.cap { position: absolute; left: 50%; top: -10px; transform: translateX(-50%); height: 21px; line-height: 15px; padding: 0 8px; white-space: nowrap; border: 1px solid #5a7089; border-top: 0; border-radius: 0 0 4px 4px; background: linear-gradient(#f6faff, #dce8f6); color: #1d3c8a; font-size: 12px; }
.tables { flex: 1; min-width: 0; display: flex; height: 107px; background: #fff; border: 1px solid #8199bb; }
.grid-wrap { flex: 1; min-width: 0; border-right: 2px solid #8199bb; }
.side-wrap { flex: 0 0 200px; }
.grid th, .ptable th { font-family: "Open Sans", "Noto Sans CJK SC", sans-serif; }
.grid th { height: 32px; background: linear-gradient(#f2f7fe, #e2ebf8); border-right: 1px solid #8199bb; border-bottom: 1px solid #8199bb; }
.grid th.blank { background: #cfdbec; border-right: 0; }
.grid.side th { height: 21px; }
.grid td { height: 22px; background: #afd3f6; border-right: 1px solid #c8e0f8; border-bottom: 1px solid #d5e6f8; }
.grid td.rowhead { background: #c3c8d0; border-right: 1px solid #8199bb; }
.corner { position: relative; }
.corner::after { content: ""; position: absolute; right: 2px; bottom: 2px; border: 5px solid transparent; border-right-color: #3d76c8; border-bottom-color: #3d76c8; }
.ptr { display: block; margin-left: 3px; width: 0; border: 4px solid transparent; border-left-color: #000; border-right: 0; }
.hsplit { flex: 0 0 5px; background: linear-gradient(#dfe6ee, #8a9bb0); display: flex; justify-content: center; align-items: center; gap: 8px; }
.tri { width: 0; border: 3px solid transparent; border-top: 4px solid #2c477c; border-bottom: 0; }
.dots { width: 36px; height: 2px; background: repeating-linear-gradient(90deg, #2c477c 0 2px, transparent 2px 4px); }

.lower { flex: 1; min-height: 0; display: flex; }
.process { flex: 0 0 644px; padding-top: 9px; display: flex; }
.proc-body { flex: 1; min-width: 0; display: flex; }
.vtab { position: relative; flex: 0 0 21px; background: linear-gradient(90deg, #e2ecf9, #7fa6da); overflow: hidden; }
.vtab span { position: absolute; left: 3px; top: 14px; writing-mode: vertical-rl; font-weight: bold; line-height: 14px; font-size: 13px; }
.tool { flex: 0 0 198px; border: 1px solid #3a6096; border-left: 6px solid #a9c6ee; display: flex; flex-direction: column; padding-top: 6px; background: linear-gradient(90deg, #6d9ce0, #cfe0f8) top/100% 6px no-repeat; overflow: hidden; }
.hint { flex: 0 0 35px; background: #f4f4f4; display: flex; align-items: center; justify-content: space-between; padding: 0 7px 0 14px; color: #1b3a66; }
.tree { flex: 1; background: #fff; border-top: 1px solid #8ba4c8; padding-left: 1px; }
.tree div { display: flex; height: 19px; align-items: center; }
.tree b { font-weight: normal; display: flex; align-items: center; gap: 6px; height: 18px; padding-right: 6px; }
.tree div:first-child b { background: #f3f3f3; box-shadow: 0 0 0 1px #d8d8d8; }
.flow { flex: 1; min-width: 0; display: flex; background: #fff; border: 1px solid #8ba4c8; border-left: 0; }
.flow table { flex: 1; min-width: 0; align-self: flex-start; }
.flow th { height: 18px; text-align: left; background: linear-gradient(#f4f8fe, #e3ecf8); border-right: 1px solid #a5b9d5; border-bottom: 1px solid #a5b9d5; padding-left: 8px; color: #101828; }
.flow th:first-child { padding-left: 1px; }
.flow td { height: 19px; border-right: 1px solid #dce6f3; padding-left: 6px; }
.flow td:first-child { padding-left: 0; }
.flow th:last-child, .flow td:last-child { border-right: 0; }
.flow .cut td { height: 4px; }
.node { display: flex; align-items: center; gap: 0; height: 19px; }
.node svg + svg { margin-right: 6px; }
.sbar { flex: 0 0 14px; background: #f0f1f4; display: flex; flex-direction: column; align-items: center; padding-top: 6px; }
.up { width: 0; border: 4px solid transparent; border-bottom: 6px solid #444; border-top: 0; }

.info { flex: 1; min-width: 0; display: flex; flex-direction: column; }
.tabs { flex: 0 0 26px; display: flex; align-items: center; background: linear-gradient(#b9cde7, #dfeaf6); border-bottom: 1px solid #a8bcd6; }
.tabs button { height: 25px; padding: 0 8px 2px; }
.tabs .on { position: relative; width: 69px; padding: 0 0 4px; font-weight: bold; font-size: 13px; color: #fff; background: radial-gradient(circle at 50% 100%, #5c97ea, #1e5cc4); border: 1px solid #164a9a; }
.tabs .on::after { content: ""; position: absolute; left: 50%; bottom: 0; margin-left: -6px; border: 6px solid transparent; border-bottom-color: #fff; border-top: 0; }
.down { margin-left: auto; margin-right: 5px; width: 0; border: 5px solid transparent; border-top: 6px solid #000; border-bottom: 0; }
.info-body { flex: 1; min-height: 0; display: flex; }
.params { flex: 0 0 377px; display: flex; flex-direction: column; border-right: 2px solid #4a74b4; }
.subtabs { flex: 0 0 27px; position: relative; background: linear-gradient(#dce8fa, #f0f6ff 22px, #3a6096 22px 23px, #8fb4ea 23px); padding-left: 5px; }
.subtabs strong { position: absolute; left: 37px; top: 4px; font-size: 13px; }
.ptable { flex: 1; min-height: 0; overflow: hidden; display: flex; padding-left: 2px; background: #fff; }
.ptable table { flex: 1; min-width: 0; align-self: flex-start; }
.ptable th { height: 33px; background: linear-gradient(#f2f7fe, #e0eaf7); border: solid #8199bb; border-width: 1px 1px 1px 0; }
.ptable td { height: 22px; border-right: 1px solid #c3d4ec; border-bottom: 1px solid #c3d4ec; line-height: 16px; }
.ptable td:nth-child(3), .ptable td:nth-child(4) { padding-left: 1px; }
.ptable td:first-child { background: linear-gradient(90deg, #e6effa, #c3d2e5); border-color: #8199bb; }
.ptable td:nth-child(2), .ptable td:nth-child(4) { background: #e8f1fc; }
.ptable tr:nth-child(even) td:not(:first-child) { background: #f3f2f2; }
.ptable .sel td:nth-child(2) { background: #afd3f6; }
.ptable td:nth-child(4) { font-size: 11px; }
.ptable td.mu { padding-left: 5px; }
.ptable td.hi { vertical-align: top; }
.thumb { width: 12px; height: 564px; margin-top: 6px; border: 1px solid #9499a8; background: linear-gradient(90deg, #fdfdfe, #e8e9f2); border-radius: 1px; display: flex; align-items: center; justify-content: center; }
.thumb i { width: 9px; height: 7px; background: repeating-linear-gradient(#777 0 1px, transparent 1px 2px); }
.grip { flex-basis: 6px; display: flex; flex-direction: column; align-items: center; padding-top: 340px; gap: 8px; border-right: 1px solid #35609c; }
.left { width: 0; border: 3px solid transparent; border-right: 4px solid #1d3a68; border-left: 0; }
.vdots { width: 2px; height: 36px; background: repeating-linear-gradient(#2c477c 0 2px, transparent 2px 4px); }
.remarks { flex: 1; min-width: 0; display: flex; flex-direction: column; }
.notes { flex: 1; min-height: 0; display: flex; background: #efefef; }
.note { display: flex; flex-direction: column; border-right: 2px solid #8aa0bf; padding-left: 1px; }
.n1 { flex: 0 0 199px; }
.n2 { flex: 1; border-right: 0; padding-left: 0; }
.note label { height: 26px; line-height: 23px; padding-left: 2px; color: #1d3c8a; background: linear-gradient(#f2f7fe, #dce6f3); border-bottom: 2px solid #77879c; }
.area { flex: 1; display: flex; }
.area textarea { flex: 1; min-width: 0; border: 0; resize: none; background: none; padding: 1px 0 0 2px; font: inherit; line-height: 12px; outline: 0; overflow: hidden; white-space: pre; color: #000; }
.rail2 { flex: 0 0 17px; border-left: 1px solid #fff; display: flex; justify-content: center; padding-top: 7px; }

.behind { flex: 0 0 10px; display: flex; flex-direction: column; background: #062f92; overflow: hidden; }
.behind i { border-right: 1px solid #111; border-bottom: 2px solid #111; background: #8cc7cd; flex: 0 0 29px; }
.behind .b1 { flex-basis: 83px; background: #0a36a0; border: 0; }
.behind .b2 { flex-basis: 31px; background: #f0f1f2; }
.behind .c0 { flex-basis: 17px; }
.behind .b3 { flex-basis: 32px; background: #4cc3a0; }
.behind .b4 { flex-basis: 28px; background: #7fcabd; }
.behind b { font-size: 11px; display: block; padding-top: 8px; }

.watermark { position: absolute; right: 108px; bottom: -8px; color: #b4b4b4; font: 15px/20px "Noto Sans", "Noto Sans CJK SC", sans-serif; width: 188px; white-space: nowrap; }
.watermark p { font-size: 20px; line-height: 28px; }

/* Word window */
.word { position: absolute; left: 0; top: 276px; bottom: 0; width: 50.2%; display: flex; flex-direction: column; background: #bfdbff; font-family: "Open Sans", "Noto Sans CJK SC", sans-serif; box-shadow: 0 0 10px rgba(0, 0, 0, .45); overflow: clip; overflow-clip-margin: 12px; color: #15428b; }
.title { flex: 0 0 30px; background: #fff; display: flex; align-items: center; position: relative; }
.qat { margin-left: 36px; width: 117px; height: 21px; margin-top: 4px; padding-left: 15px; border: 1px solid #aab4c4; border-left: 0; border-radius: 0 11px 11px 0; display: flex; align-items: center; gap: 8px; }
.dd.g { margin: 0 -1px 0 -2px; opacity: .5; }
.more { margin-left: 7px; margin-top: 3px; }
.title h1 { flex: 1; text-align: center; font-size: 12px; color: #111; padding-right: 46px; }
.wbtn { display: flex; margin-right: 17px; gap: 33px; }
.orb { position: absolute; left: 1px; top: 7px; z-index: 2; }
.rtabs { flex: 0 0 26px; display: flex; align-items: flex-end; gap: 1px; padding-left: 46px; border-bottom: 1px solid #8db2e3; }
.rtabs button { height: 25px; padding: 0 14px; line-height: 25px; border: 1px solid transparent; border-width: 1px 0; }
.rtabs .on { padding: 0 11px; margin-right: 2px; border: 1px solid #9dbce6; border-bottom: 0; border-radius: 3px 3px 0 0; background: linear-gradient(#f7fbff, #e0ebf8); }
.rtabs .help { margin: 0 5px 5px auto; }

.ribbon { flex: 0 0 107px; display: flex; gap: 3px; padding: 3px 2px; background: linear-gradient(#dbe6f4, #c7d9ee 25%, #cfe0f3 60%, #e4f4fd); border-bottom: 1px solid #8fb3d9; }
.rg { min-width: 0; border: 1px solid #a3c2de; border-radius: 3px; display: flex; flex-direction: column; box-shadow: inset 1px 1px 0 rgba(255, 255, 255, .45); background: linear-gradient(#dee8f5, #d2e0f1 18%, #c7d8ed 19%, #d9e7f5 80%); }
.rc { flex: 1; display: flex; min-height: 0; padding: 4px 4px 0; }
.rg footer { flex: 0 0 19px; background: #c2d9f1; color: #3e6aaa; display: flex; align-items: center; justify-content: center; position: relative; line-height: 18px; padding-top: 1px; }
.rg footer svg { position: absolute; right: 4px; top: 4px; }
.clip { flex: 0 0 72px; } .font { flex: 0 0 316px; } .para { flex: 0 0 165px; } .styles { flex: 0 0 298px; } .edit { flex: 0 0 42px; align-items: center; padding-top: 4px; }
.rg.clip footer { padding-right: 20px; }
.paste, .chg { display: flex; flex-direction: column; align-items: center; line-height: 16px; gap: 4px; }
.paste { width: 40px; }
.mini { display: flex; flex-direction: column; gap: 7px; margin: 2px 0 0 6px; }
.col { flex-direction: column; padding-top: 12px; }
.col.tight { padding-top: 4px; gap: 4px; }
.rr { display: flex; gap: 4px; }
.font .rr { gap: 3px; }
.low { margin-top: 11px; }
select { appearance: none; font: inherit; color: #111; border: 1px solid #b3cbe6; background: #e8f1fb; height: 25px; padding: 0 4px 3px 2px; border-radius: 0; background-image: conic-gradient(from -36deg at 50% 100%, #5c83b8 72deg, transparent 0); background-size: 6px 4px; background-repeat: no-repeat; background-position: right 4px top 10px; }
.fsel { width: 125px; } .ssel { width: 54px; margin-left: -4px; }
.bg { display: flex; height: 21px; border: 1px solid #8fafd8; border-radius: 3px; background: linear-gradient(#dbe8f7, #c6daf1 50%, #b9d0ee 51%, #cfe2f6); color: #222; }
.bg button { min-width: 21px; padding: 0 1px; display: flex; align-items: center; justify-content: center; line-height: 19px; }
.bg button + button { border-left: 1px solid rgba(140, 172, 216, .35); }
.bg .d { gap: 3px; min-width: 27px; }
.para .bg .d { min-width: 31px; }
.bg .hot { background: linear-gradient(#fccb83, #f9a544 50%, #fddf8c); }
.ser { font-family: "Liberation Serif", serif; font-size: 15px; }
i.ser { font-style: italic; font-weight: bold; }
.ser.sm { font-size: 12px; }
.box { border: 1px solid #444; line-height: 14px; padding: 0 2px; font-size: 14px; }
.u { text-decoration: underline; }
.s, .sb { font-family: "Liberation Serif", serif; font-size: 12px; }
.s { text-decoration: line-through; }
.sb { font-size: 13px; }
sub, sup { font-size: 7px; line-height: 0; color: #2356b5; }
.red { color: #2c5aa8; border-bottom: 4px solid #f00; line-height: 13px; padding: 0 2px; }
.shade { background: #a9a9a9; line-height: 15px; padding: 0 1px; }
.circ { width: 16px; height: 16px; border: 1px solid #222; border-radius: 50%; font-size: 11px; line-height: 14px; }
.tup, .tdn { width: 0; border: 2px solid transparent; align-self: flex-start; margin-top: 4px; }
.tup { border-bottom: 3px solid #2356b5; border-top: 0; } .tdn { border-top: 3px solid #2356b5; border-bottom: 0; }
.t8 { font: bold 8px "Liberation Sans", sans-serif; fill: #222; }
.t10 { font: 10px "Liberation Sans", sans-serif; }
.t12 { font: 10px "Noto Sans CJK SC", sans-serif; fill: #2b48b8; }
.bl { fill: #2b48b8; } .rd { fill: #a32020; }

.gal { display: flex; gap: 8px; padding: 4px 0 4px 4px; height: 59px; width: 233px; border: 1px solid #b3cbe6; background: #d3e3f5; }
.gal button { width: 64px; height: 49px; background: #fff; display: flex; flex-direction: column; align-items: center; overflow: hidden; line-height: 16px; color: #1c1c84; }
.gal b { font: bold 19px/32px "Liberation Serif", serif; color: #111; width: 58px; overflow: hidden; text-align: left; height: 32px; flex: none; }
.gal b.big { font-size: 26px; line-height: 28px; }
.gsb { margin: -4px 0 -4px -3px; width: 14px; display: flex; flex-direction: column; }
.gsb i { flex: 1; border: 1px solid #a9c4e4; background: #d0e1f5; display: flex; align-items: center; justify-content: center; }
.gsb i::after { content: ""; border: 3px solid transparent; border-top: 4px solid #5c83b8; border-bottom: 0; }
.gsb .u { background: #e9e9e9; }
.gsb .u::after { border: 3px solid transparent; border-bottom: 4px solid #aaa; border-top: 0; }
.chg { margin: 0 auto; gap: 5px; }
.chg > svg:first-child { margin-top: 1px; }
.ib { width: 30px; height: 30px; border: 1px solid #a9c4e4; border-radius: 3px; background: linear-gradient(#d5e3f4, #d5e3f4 50%, #eaf2fb 51%); display: flex; align-items: center; justify-content: center; }

.docarea { flex: 1; min-height: 0; position: relative; display: flex; background: linear-gradient(#a6c3eb, #a0bee8 15%, #7b9ecc 50%, #567fb3 88%, #6088bf); }
.swoosh { position: absolute; left: 0; top: 0; }
.pages { flex: 1; min-width: 0; padding: 6px 71px 0 72px; overflow: hidden; display: flex; flex-direction: column; gap: 14px; }
.page { position: relative; flex: none; background: #fff; box-shadow: -1px 1px 0 #555c66, 3px 3px 5px rgba(20, 30, 50, .7); color: #000; padding: 3px 50px 0 48px; font: 14px/26px "Liberation Serif", "Noto Sans CJK SC", serif; white-space: nowrap; }
.page p { height: 26px; }
.m { font-family: "Noto Sans Mono CJK SC", "Liberation Mono", monospace; }
.p1 { height: 218px; }
.page .in1 { padding-left: 34px; } .page .in2 { padding-left: 42px; line-height: 24px; } .page .in3 { padding-left: 24px; }
.page u { text-decoration: underline wavy #2a8a3a 1px; text-underline-offset: 2px; }
.page u.r { text-decoration-color: #d22; }
.cr { font-size: 12px; color: #777; margin-left: 1px; }
.page .empty { height: 18px; line-height: 18px; padding-left: 168px; }
.page .one { height: 21px; line-height: 20px; padding-left: 42px; overflow: hidden; }
.sl { background: #a5cef1; color: #0c2f63; }
.page .sl-row { height: 21px; line-height: 20px; }
.sl-row .sl { display: inline-block; height: 20px; }
.two { background: #6d8ba8; color: #0a2240; display: inline-block; height: 18px; line-height: 20px; }
.far { margin-left: 54px; }
.ybox { position: absolute; left: 33px; right: 27px; top: 110px; height: 64px; border: 4px solid #ffff1a; box-shadow: 2px 2px 4px rgba(0, 0, 0, .7), inset 2px 2px 4px rgba(0, 0, 0, .6); }
.mk { position: absolute; width: 24px; height: 24px; border: 0 solid #a6a6a6; }
.mk.bl { left: 24px; top: 176px; border-width: 1px 1px 0 0; }
.mk.br { right: 26px; top: 176px; border-width: 1px 0 0 1px; }
.mk.tl { left: 24px; top: 28px; border-width: 0 1px 1px 0; }
.mk.tr { right: 26px; top: 28px; border-width: 0 0 1px 1px; }
.p2 { flex: 1 0 230px; padding-top: 52px; }
.page.p2 p { height: 21px; line-height: 21px; }
.blue { color: #1010a8; }
.blue b { color: #1010c8; }
.blue .fpc { display: inline-block; height: 20px; background: #f00; font-size: 16px; line-height: 20px; }
.lg { font-size: 15px; }
.lg .blue { font-size: 14px; }
.wscroll { flex: 0 0 16px; display: flex; flex-direction: column; align-items: center; padding-top: 3px; gap: 3px; background: #9dbbe5; }
.split { width: 9px; height: 2px; background: #35538a; }
.track { flex: 1; width: 16px; background: linear-gradient(90deg, #a8c4ea 0 1px, #6d90c0 1px, #7f9fcb); display: flex; flex-direction: column; align-items: center; padding: 8px 0 20px; justify-content: space-between; }
.track .up { border-bottom-color: #33507f; }
.th { width: 14px; height: 14px; border: 1px solid #54729e; background: repeating-linear-gradient(#6a7f9f 0 1px, transparent 1px 3px) 3px 2px/7px 8px no-repeat, #dce8f6; }
```
